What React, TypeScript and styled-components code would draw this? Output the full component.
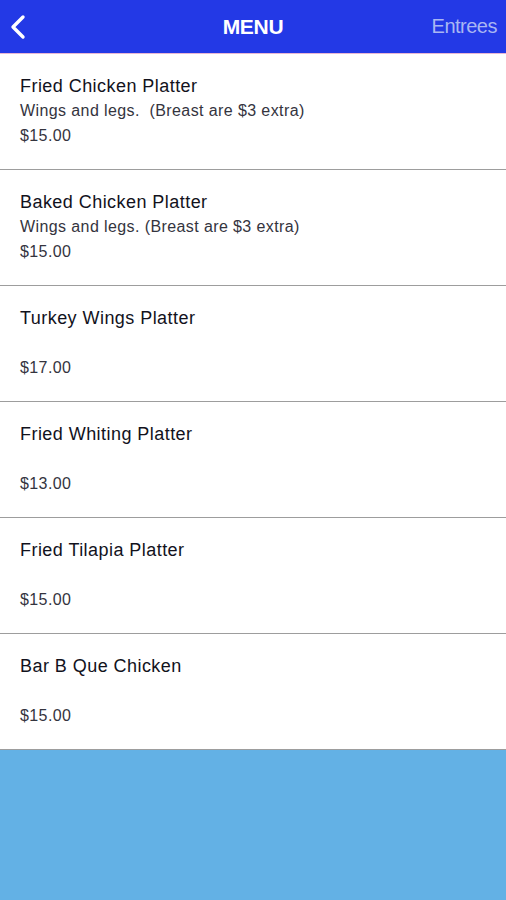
import React from "react";
import styled, { createGlobalStyle } from "styled-components";

const Global = createGlobalStyle`
  html, body { margin: 0; padding: 0; }
  body { font-family: "Liberation Sans", Arial, sans-serif; background: #63b1e5; }
  #root { min-height: 900px; display: flex; flex-direction: column; }
`;

const Page = styled.div`
  width: 506px;
  min-height: 900px;
  display: flex;
  flex-direction: column;
  background: #63b1e5;
`;

const Header = styled.header`
  height: 53px;
  background: #2339e6;
  border-bottom: 1px solid #e8b7d4;
  display: grid;
  grid-template-columns: 1fr auto 1fr;
  align-items: center;
  color: #fff;
`;

const Back = styled.div`
  display: flex;
  align-items: center;
  padding-left: 9px;
`;

const Title = styled.h1`
  margin: 0;
  font-size: 21px;
  font-weight: bold;
  color: #fff;
  letter-spacing: -0.3px;
`;

const Right = styled.div`
  justify-self: end;
  padding-right: 9px;
  font-size: 20px;
  color: #a9b6f3;
  letter-spacing: -0.5px;
`;

const List = styled.ul`
  margin: 0;
  padding: 0;
  list-style: none;
  background: #fff;
`;

const Row = styled.li`
  box-sizing: border-box;
  height: 116px;
  border-bottom: 1px solid #9d9d9d;
  padding: 20px 20px 0;
`;

const Name = styled.div`
  font-size: 18px;
  line-height: 25px;
  letter-spacing: 0.45px;
  color: #12121c;
`;

const Line = styled.div`
  font-size: 16px;
  line-height: 24.5px;
  min-height: 24.5px;
  letter-spacing: 0.4px;
  color: #34343e;
`;

const items = [
  { name: "Fried Chicken Platter", desc: "Wings and legs.\u00a0 (Breast are $3 extra)", price: "$15.00" },
  { name: "Baked Chicken Platter", desc: "Wings and legs. (Breast are $3 extra)", price: "$15.00" },
  { name: "Turkey Wings Platter", desc: "", price: "$17.00" },
  { name: "Fried Whiting Platter", desc: "", price: "$13.00" },
  { name: "Fried Tilapia Platter", desc: "", price: "$15.00" },
  { name: "Bar B Que Chicken", desc: "", price: "$15.00" },
];

export default function App() {
  return (
    <Page>
      <Global />
      <Header>
        <Back>
          <svg width="18" height="28" viewBox="0 0 18 28" fill="none">
            <path d="M14 4 L4 14 L14 24" stroke="#fff" strokeWidth="3.4" strokeLinecap="round" strokeLinejoin="round" />
          </svg>
        </Back>
        <Title>MENU</Title>
        <Right>Entrees</Right>
      </Header>
      <List>
        {items.map((it) => (
          <Row key={it.name}>
            <Name>{it.name}</Name>
            <Line>{it.desc}</Line>
            <Line>{it.price}</Line>
          </Row>
        ))}
      </List>
    </Page>
  );
}
